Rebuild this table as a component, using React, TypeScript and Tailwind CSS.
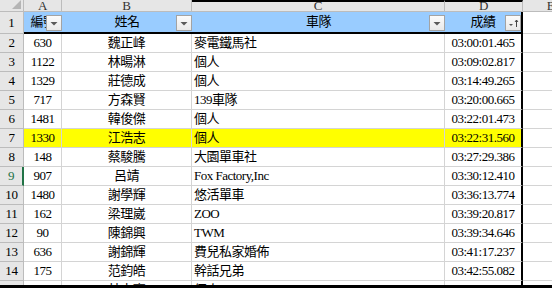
import React from "react";

const rows: [string, string, string, string, string][] = [
  ["2", "630", "魏正峰", "麥電鐵馬社", "03:00:01.465"],
  ["3", "1122", "林暘淋", "個人", "03:09:02.817"],
  ["4", "1329", "莊德成", "個人", "03:14:49.265"],
  ["5", "717", "方森賢", "139車隊", "03:20:00.665"],
  ["6", "1481", "韓俊傑", "個人", "03:22:01.473"],
  ["7", "1330", "江浩志", "個人", "03:22:31.560"],
  ["8", "148", "蔡駿騰", "大園單車社", "03:27:29.386"],
  ["9", "907", "呂靖", "Fox Factory,Inc", "03:30:12.410"],
  ["10", "1480", "謝學輝", "悠活單車", "03:36:13.774"],
  ["11", "162", "梁理崴", "ZOO", "03:39:20.817"],
  ["12", "90", "陳錦興", "TWM", "03:39:34.646"],
  ["13", "636", "謝錦輝", "費兒私家婚佈", "03:41:17.237"],
  ["14", "175", "范鈞皓", "幹話兄弟", "03:42:55.082"],
  ["15", "1245", "林志豪", "個人", "03:43:10.118"],
];

const grid = "grid grid-cols-[24px_38px_130px_253px_78px_56px] w-[579px]";
const font = { fontFamily: '"Liberation Serif", "Noto Sans CJK TC", serif' };

function FilterBtn({ sort }: { sort?: boolean }) {
  return (
    <div className="absolute right-0 bottom-[1px] w-[16px] h-[16px] border border-[#a3a3a3] bg-gradient-to-b from-[#fbfbfb] to-[#e9e9e9] flex items-center justify-center">
      {sort ? (
        <svg width="14" height="14" viewBox="0 0 14 14">
          <polygon points="3,8 7,8 5,10" fill="#555" />
          <line x1="10.5" y1="4" x2="10.5" y2="11" stroke="#444" strokeWidth="1" />
          <polyline points="9,6 10.5,4 12,6" fill="none" stroke="#444" strokeWidth="1" />
        </svg>
      ) : (
        <svg width="14" height="14" viewBox="0 0 14 14">
          <polygon points="3.5,6 10.5,6 7,9.5" fill="#5a5a5a" />
        </svg>
      )}
    </div>
  );
}

export default function App() {
  return (
    <div
      className="w-[552px] h-[288px] overflow-hidden bg-white text-[13px] text-black flex flex-col"
      style={font}
    >
      {/* column header row */}
      <div className={`${grid} h-[12px] shrink-0 bg-[#e6e6e6] text-[#333]`}>
        <div className="relative border-r border-b border-[#bcbcbc] overflow-hidden">
          <svg className="absolute right-[2px] bottom-[2px]" width="9" height="9" viewBox="0 0 9 9">
            <polygon points="9,0 9,9 0,9" fill="#b5b5b5" />
          </svg>
        </div>
        {["A", "B", "C", "D", "E"].map((l, i) => (
          <div
            key={l}
            className={`border-r border-b border-[#bcbcbc] overflow-hidden flex justify-center items-end ${
              i === 2 || i === 3 ? "border-t-2 border-t-black" : ""
            }`}
          >
            <span className="leading-[14px] text-[13px] translate-y-[2px] tracking-[-0.3px]">{l}</span>
          </div>
        ))}
      </div>

      {/* header row 1 */}
      <div className={`${grid} h-[22px] shrink-0`}>
        <div className="bg-[#e6e6e6] border-r border-b border-[#bcbcbc] flex items-center justify-center leading-[20px]">
          1
        </div>
        {[
          ["編號", false],
          ["姓名", false],
          ["車隊", false],
          ["成績", true],
        ].map(([t, s], i) => (
          <div
            key={i}
            className={`relative bg-[#99ccff] border-b-2 border-black overflow-hidden flex items-center justify-center leading-[20px] whitespace-nowrap tracking-[-0.5px] ${
              i === 3 ? "border-r-2 border-r-black" : ""
            }`}
          >
            <span>{t as string}</span>
            <FilterBtn sort={s as boolean} />
          </div>
        ))}
        <div className="border-r border-b border-[#d4d4d4]" />
      </div>

      {/* data rows */}
      {rows.map(([n, a, b, c, d], idx) => {
        const yellow = n === "7";
        const sel = n === "9";
        const last = idx === rows.length - 1;
        const cellBg = yellow ? "bg-[#ffff00]" : "bg-white";
        return (
          <div key={n} className={`${grid} ${last ? "h-[4px]" : "h-[19px]"} shrink-0 overflow-hidden`}>
            <div
              className={`bg-[#e6e6e6] border-b border-[#bcbcbc] flex justify-center leading-[18px] tracking-[-0.3px] ${
                sel ? "text-[#217346] border-r-2 border-r-[#217346]" : "border-r"
              }`}
            >
              {n}
            </div>
            <div className={`${cellBg} border-r border-b border-[#d4d4d4] flex justify-center leading-[18px] tracking-[-0.5px]`}>
              {a}
            </div>
            <div className={`${cellBg} border-r border-b border-[#d4d4d4] flex justify-center leading-[18px] tracking-[-0.5px] whitespace-nowrap`}>
              {b}
            </div>
            <div className={`${cellBg} border-r border-b border-[#d4d4d4] pl-[2px] leading-[18px] tracking-[-0.5px] whitespace-nowrap overflow-hidden`}>
              {c}
            </div>
            <div className={`${cellBg} border-b border-b-[#d4d4d4] border-r-2 border-r-black flex justify-center leading-[18px] tracking-[-0.5px] whitespace-nowrap`}>
              {d}
            </div>
            <div className="bg-white border-r border-b border-[#d4d4d4]" />
          </div>
        );
      })}

      {/* bottom frame */}
      <div className="h-[3px] shrink-0 bg-black" />
    </div>
  );
}
